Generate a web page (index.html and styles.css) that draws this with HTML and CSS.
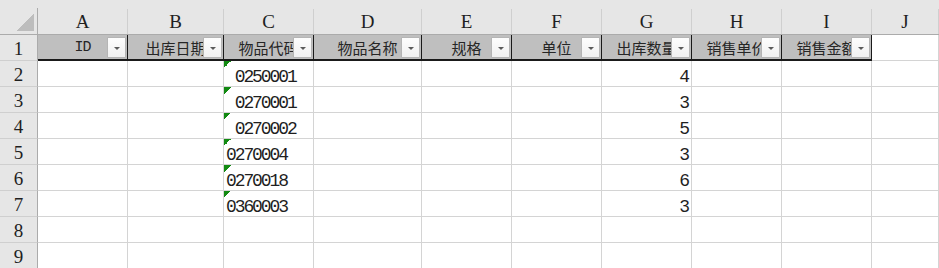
FILE: index.html
```html
<html>
  <head>
    <title>出库明细</title>
    <link rel="stylesheet" href="styles.css">
  </head>
  <body>
    <main class="sheet">
      <!-- column letters -->
      <div class="corner"><span></span></div>
      <div class="col-head"><span>A</span></div>
      <div class="col-head"><span>B</span></div>
      <div class="col-head"><span>C</span></div>
      <div class="col-head"><span>D</span></div>
      <div class="col-head"><span>E</span></div>
      <div class="col-head"><span>F</span></div>
      <div class="col-head"><span>G</span></div>
      <div class="col-head"><span>H</span></div>
      <div class="col-head"><span>I</span></div>
      <div class="col-head"><span>J</span></div>

      <!-- row 1: filter headers -->
      <div class="row-head">1</div>
      <div class="field"><span class="latin">ID</span><button class="filter"></button></div>
      <div class="field">出库日期<button class="filter"></button></div>
      <div class="field">物品代码<button class="filter"></button></div>
      <div class="field">物品名称<button class="filter"></button></div>
      <div class="field">规格<button class="filter"></button></div>
      <div class="field">单位<button class="filter"></button></div>
      <div class="field">出库数量<button class="filter"></button></div>
      <div class="field">销售单价<button class="filter"></button></div>
      <div class="field">销售金额<button class="filter"></button></div>
      <div class="cell"></div>

      <div class="row-head">2</div>
      <div class="cell"></div><div class="cell"></div>
      <div class="cell text"> 0250001</div>
      <div class="cell"></div><div class="cell"></div><div class="cell"></div>
      <div class="cell num">4</div>
      <div class="cell"></div><div class="cell"></div><div class="cell"></div>

      <div class="row-head">3</div>
      <div class="cell"></div><div class="cell"></div>
      <div class="cell text"> 0270001</div>
      <div class="cell"></div><div class="cell"></div><div class="cell"></div>
      <div class="cell num">3</div>
      <div class="cell"></div><div class="cell"></div><div class="cell"></div>

      <div class="row-head">4</div>
      <div class="cell"></div><div class="cell"></div>
      <div class="cell text"> 0270002</div>
      <div class="cell"></div><div class="cell"></div><div class="cell"></div>
      <div class="cell num">5</div>
      <div class="cell"></div><div class="cell"></div><div class="cell"></div>

      <div class="row-head">5</div>
      <div class="cell"></div><div class="cell"></div>
      <div class="cell text">0270004</div>
      <div class="cell"></div><div class="cell"></div><div class="cell"></div>
      <div class="cell num">3</div>
      <div class="cell"></div><div class="cell"></div><div class="cell"></div>

      <div class="row-head">6</div>
      <div class="cell"></div><div class="cell"></div>
      <div class="cell text">0270018</div>
      <div class="cell"></div><div class="cell"></div><div class="cell"></div>
      <div class="cell num">6</div>
      <div class="cell"></div><div class="cell"></div><div class="cell"></div>

      <div class="row-head">7</div>
      <div class="cell"></div><div class="cell"></div>
      <div class="cell text">0360003</div>
      <div class="cell"></div><div class="cell"></div><div class="cell"></div>
      <div class="cell num">3</div>
      <div class="cell"></div><div class="cell"></div><div class="cell"></div>

      <div class="row-head">8</div>
      <div class="cell"></div><div class="cell"></div><div class="cell"></div>
      <div class="cell"></div><div class="cell"></div><div class="cell"></div>
      <div class="cell"></div><div class="cell"></div><div class="cell"></div>
      <div class="cell"></div>

      <div class="row-head">9</div>
      <div class="cell"></div><div class="cell"></div><div class="cell"></div>
      <div class="cell"></div><div class="cell"></div><div class="cell"></div>
      <div class="cell"></div><div class="cell"></div><div class="cell"></div>
      <div class="cell"></div>
    </main>
  </body>
</html>
```
FILE: styles.css
```css
html,
body {
  margin: 0;
  padding: 0;
  overflow: hidden;
  background: #fff;
  color: #1f1f1f;
}

.sheet {
  display: grid;
  grid-template-columns: 38px 90px 96px 90px 108px 90px 90px 90px 90px 90px 1fr;
  grid-template-rows: 35px repeat(9, 26px);
  width: 939px;
}

.sheet > div {
  box-sizing: border-box;
  min-width: 0;
}

/* top-left select-all corner */
.corner {
  background: #e6e6e6;
  border-bottom: 1px solid #ababab;
  padding-top: 8px;
}

.corner span {
  display: block;
  height: 100%;
  border-right: 1px solid #ababab;
  box-sizing: border-box;
  padding: 6px 3px 0 16px;
}

.corner span::before {
  content: "";
  display: block;
  width: 18px;
  height: 17px;
  background: linear-gradient(to bottom right, transparent 50%, #bdbdbd 50%);
}

/* column letters */
.col-head {
  background: #e6e6e6;
  border-bottom: 1px solid #ababab;
  padding-top: 9px;
}

.col-head span {
  display: block;
  height: 100%;
  box-sizing: border-box;
  padding-top: 1px;
  border-right: 1px solid #cfcfcf;
  text-align: center;
  font-family: "Liberation Serif", serif;
  font-size: 19px;
  line-height: 24px;
}

/* row numbers */
.row-head {
  background: #e6e6e6;
  border-right: 1px solid #ababab;
  border-bottom: 1px solid #cfcfcf;
  text-align: center;
  font-family: "Liberation Serif", serif;
  font-size: 19px;
  line-height: 25px;
  padding-top: 1px;
}

/* header row with autofilter buttons */
.field {
  position: relative;
  overflow: hidden;
  background: #bfbfbf;
  border-right: 1px solid #1a1a1a;
  border-bottom: 2px solid #1a1a1a;
  text-align: center;
  white-space: nowrap;
  font-family: "Noto Sans CJK SC", sans-serif;
  font-size: 15px;
  line-height: 24px;
  padding-top: 1px;
  color: #262626;
}

.field .latin {
  font-family: "Liberation Mono", monospace;
  font-size: 15px;
  letter-spacing: -1px;
}

.filter {
  position: absolute;
  top: 2px;
  right: 1px;
  width: 19px;
  height: 21px;
  padding: 0;
  border: 1px solid #b5b5b5;
  border-radius: 1px;
  background: linear-gradient(#fdfdfd, #f1f1f1);
}

.filter::after {
  content: "";
  display: block;
  margin: 1px auto 0;
  width: 0;
  height: 0;
  border-left: 3.5px solid transparent;
  border-right: 3.5px solid transparent;
  border-top: 3.5px solid #5a5a5a;
}

/* data cells */
.cell {
  border-right: 1px solid #d4d4d4;
  border-bottom: 1px solid #d4d4d4;
  font-family: "Liberation Mono", monospace;
  font-size: 18px;
  letter-spacing: -2.1px;
  line-height: 22px;
  padding-top: 5px;
  white-space: pre;
  overflow: hidden;
}

/* numbers stored as text: green corner marker */
.cell.text {
  padding-left: 2px;
  background: linear-gradient(135deg, #128a12 50%, transparent 50%) no-repeat 0 0 / 7px 7px;
}

.cell.num {
  text-align: right;
  padding-right: 3px;
}
```
